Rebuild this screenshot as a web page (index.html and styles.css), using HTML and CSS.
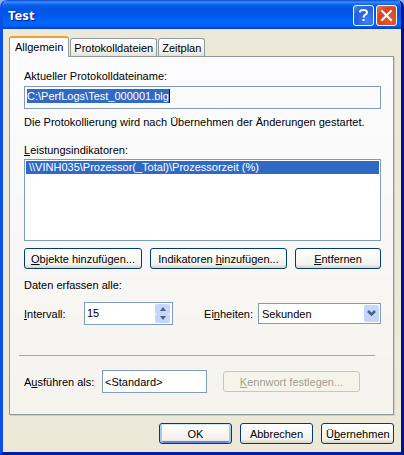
FILE: index.html
```html
<!DOCTYPE html>
<html lang="de">
<head>
    <meta charset="UTF-8">
    <meta name="viewport" content="width=device-width, initial-scale=1.0">
    <title>Test</title>
    <link rel="stylesheet" href="styles.css">
</head>
<body>
    <div class="window">
        <header class="title-bar">
            <h1>Test</h1>
            <button type="button" class="title-button help" aria-label="Hilfe">
                <svg width="19" height="19" viewBox="0 0 19 19">
                    <path d="M6 6.6V6q0-2 3.500-2t3.500 2.400q0 1.400-1.600 2.300T9.500 11.500" fill="none" stroke="#fff" stroke-width="2"/>
                    <rect x="8.500" y="13" width="2" height="2" fill="#fff"/>
                </svg>
            </button>
            <button type="button" class="title-button close" aria-label="Schließen">
                <svg width="19" height="19" viewBox="0 0 19 19">
                    <path d="M5 5l9 9M14 5l-9 9" stroke="#fff" stroke-width="2" stroke-linecap="square"/>
                </svg>
            </button>
        </header>

        <form class="client">
            <div class="tabs" role="tablist">
                <button type="button" class="tab active" role="tab" aria-selected="true">Allgemein</button>
                <button type="button" class="tab" role="tab" aria-selected="false">Protokolldateien</button>
                <button type="button" class="tab" role="tab" aria-selected="false">Zeitplan</button>
            </div>

            <div class="panel" role="tabpanel">
                <label for="logfile">Aktueller Protokolldateiname:</label>
                <div class="field logfile">
                    <output id="logfile" class="selected">C:\PerfLogs\Test_000001.blg</output>
                </div>
                <p class="status">Die Protokollierung wird nach Übernehmen der Änderungen gestartet.</p>

                <label for="counters"><u>L</u>eistungsindikatoren:</label>
                <select id="counters" class="counters" size="5">
                    <option selected>\\VINH035\Prozessor(_Total)\Prozessorzeit (%)</option>
                </select>

                <div class="row counter-buttons">
                    <button type="button" class="button add-objects"><span><u>O</u>bjekte hinzufügen...</span></button>
                    <button type="button" class="button add-counters"><span>Indikatoren <u>h</u>inzufügen...</span></button>
                    <button type="button" class="button remove"><span><u>E</u>ntfernen</span></button>
                </div>

                <p class="sample">Daten erfassen alle:</p>
                <div class="row interval-row">
                    <label for="interval"><u>I</u>ntervall:</label>
                    <div class="field spinner">
                        <input type="text" id="interval" value="15">
                        <div class="spin-buttons">
                            <button type="button" aria-label="Mehr">
                                <svg width="6" height="4" viewBox="0 0 6 4"><path d="M0 4l3-4 3 4z" fill="#4d6185"/></svg>
                            </button>
                            <button type="button" aria-label="Weniger">
                                <svg width="6" height="4" viewBox="0 0 6 4"><path d="M0 0l3 4 3-4z" fill="#4d6185"/></svg>
                            </button>
                        </div>
                    </div>
                    <label for="units" class="units-label">Ei<u>n</u>heiten:</label>
                    <div class="dropdown">
                        <select id="units">
                            <option>Sekunden</option>
                        </select>
                        <svg class="arrow" width="15" height="17" viewBox="0 0 15 17">
                            <path d="M4 6l3.500 3.500L11 6" fill="none" stroke="#4d6185" stroke-width="2.500"/>
                        </svg>
                    </div>
                </div>

                <hr>

                <div class="row run-as">
                    <label for="user">A<u>u</u>sführen als:</label>
                    <input type="text" id="user" class="field user" value="&lt;Standard&gt;">
                    <button type="button" class="button password" disabled><span><u>K</u>ennwort festlegen...</span></button>
                </div>
            </div>

            <div class="row dialog-buttons">
                <button type="submit" class="button default">OK</button>
                <button type="button" class="button">Abbrechen</button>
                <button type="button" class="button"><span>Ü<u>b</u>ernehmen</span></button>
            </div>
        </form>
    </div>
</body>
</html>
```

FILE: styles.css
```css
* {
    box-sizing: border-box;
}
body {
    margin: 0;
    background-color: #8fb1ea;
    color: #000;
    font-family: "Liberation Sans", Arial, sans-serif;
    font-size: 11px;
    line-height: 14px;
}
button, input, select {
    margin: 0;
    font: inherit;
    color: inherit;
}
p {
    margin: 0;
}
.window {
    min-height: 100vh;
    display: flex;
    flex-direction: column;
    border-radius: 7px 7px 0 0;
    background-color: #ece9d8;
    border: 3px solid #0831d9;
    border-left-color: #0b50e8;
    border-right-color: #00138c;
    border-bottom-color: #001ea0;
    border-top: 0;
    overflow: hidden;
}
.title-bar {
    height: 29px;
    margin: 0 -3px;
    padding: 1px 7px 0 8px;
    display: flex;
    align-items: center;
    gap: 2px;
    background: linear-gradient(#0a4ad0 0, #3a8cf8 2px, #0860ee 5px, #0054e3 9px, #0058ea 15px, #0266ff 23px, #0060f4 26px, #003dc0 29px);
}
.title-bar h1 {
    flex: 1;
    margin: 0;
    color: #fff;
    font-family: "Noto Sans", sans-serif;
    font-size: 13px;
    font-weight: bold;
    line-height: 18px;
    text-shadow: 1px 1px 1px #0a1883;
}
.title-button {
    width: 21px;
    height: 21px;
    padding: 0;
    border: 1px solid #fff;
    border-radius: 3px;
    background: radial-gradient(circle at 70% 75%, #3f80ff, #245edb 60%, #5585e8);
}
.title-button svg {
    display: block;
}
.title-button.close {
    background: radial-gradient(circle at 70% 75%, #e8582c, #d8431e 60%, #e58068);
}
.client {
    flex: 1;
    padding: 7px 7px 8px 6px;
    display: flex;
    flex-direction: column;
}
.tabs {
    display: flex;
    align-items: flex-end;
    gap: 1px;
}
.tab {
    height: 18px;
    padding: 0 3px;
    border: 1px solid #919b9c;
    border-bottom: 0;
    border-radius: 3px 3px 0 0;
    background: linear-gradient(#fff, #f0efe8 80%, #e2e0d4);
    white-space: nowrap;
}
.tab.active {
    height: 21px;
    margin-bottom: -1px;
    padding: 0 5px 1px;
    border-top: 2px solid #f0a030;
    background: #fcfcfe;
    z-index: 1;
}
.panel {
    flex: 1;
    padding: 12px 12px 20px 14px;
    display: flex;
    flex-direction: column;
    border: 1px solid #919b9c;
    background: linear-gradient(#fcfcfe, #f4f3ee);
    box-shadow: 1px 1px 0 #d0cebf;
}
.field {
    height: 23px;
    padding: 1px 2px;
    border: 1px solid #7f9db9;
    border-radius: 0;
    background-color: #fff;
}
.logfile {
    margin-top: 3px;
    padding-top: 2px;
    background-color: transparent;
}
.selected {
    display: inline-block;
    height: 14px;
    border-right: 1px solid #000;
    background-color: #316ac5;
    color: #fff;
}
.status {
    margin: 6px 0 14px;
}
.counters {
    width: 100%;
    height: 82px;
    margin-top: 2px;
    padding: 1px;
    border: 1px solid #7f9db9;
    border-radius: 0;
    background-color: #fff;
    overflow: hidden;
    outline: none;
}
.counters option {
    height: 13px;
    min-height: 13px;
    padding: 0 3px;
    line-height: 13px;
}
.counters option:checked {
    background: #316ac5 linear-gradient(#316ac5, #316ac5);
    color: #fff;
    -webkit-text-fill-color: #fff;
}
.row {
    display: flex;
    align-items: center;
}
.button {
    height: 21px;
    padding: 0 4px;
    border: 1px solid #003c74;
    border-radius: 3px;
    background: linear-gradient(#fff, #f3f2ec 80%, #d8d2c4);
    white-space: nowrap;
}
.button.default {
    box-shadow: inset 0 1px #cee7ff, inset 2px 0 #a9c6f0, inset -2px 0 #a9c6f0, inset 0 -2px #6982ee;
}
.button:disabled {
    border-color: #c9c7ba;
    background: #f5f4ea;
    color: #a1a192;
}
.counter-buttons {
    margin-top: 7px;
    justify-content: space-between;
}
.add-objects {
    width: 118px;
}
.add-counters {
    width: 137px;
}
.remove {
    width: 86px;
}
.sample {
    margin: 9px 0 10px;
}
.interval-row label:first-child {
    width: 60px;
}
.spinner {
    width: 89px;
    display: flex;
}
.spinner input {
    flex: 1;
    min-width: 0;
    padding: 0 0 2px;
    border: 0;
    outline: none;
    background: none;
}
.spin-buttons {
    display: flex;
    flex-direction: column;
}
.spin-buttons button {
    flex: 1;
    width: 15px;
    padding: 0;
    display: flex;
    align-items: center;
    justify-content: center;
    border: 0;
    border-radius: 2px;
    background-color: #c6d6fb;
}
.units-label {
    margin-left: auto;
    margin-right: 5px;
}
.dropdown {
    width: 123px;
    position: relative;
}
.dropdown select {
    display: block;
    width: 100%;
    height: 21px;
    padding: 0 20px 0 3px;
    border: 1px solid #7f9db9;
    border-radius: 0;
    background-color: #fff;
    appearance: none;
}
.arrow {
    position: absolute;
    top: 2px;
    right: 2px;
    border-radius: 2px;
    background-color: #c6d6fb;
    pointer-events: none;
}
hr {
    height: 1px;
    margin: 30px 6px 14px -5px;
    border: 0;
    background-color: #aca899;
}
.run-as label {
    width: 78px;
}
.user {
    width: 105px;
    outline: none;
}
.password {
    width: 137px;
    margin-left: 16px;
}
.dialog-buttons {
    margin-top: 8px;
    justify-content: flex-end;
    gap: 8px;
}
.dialog-buttons .button {
    width: 73px;
}
```
